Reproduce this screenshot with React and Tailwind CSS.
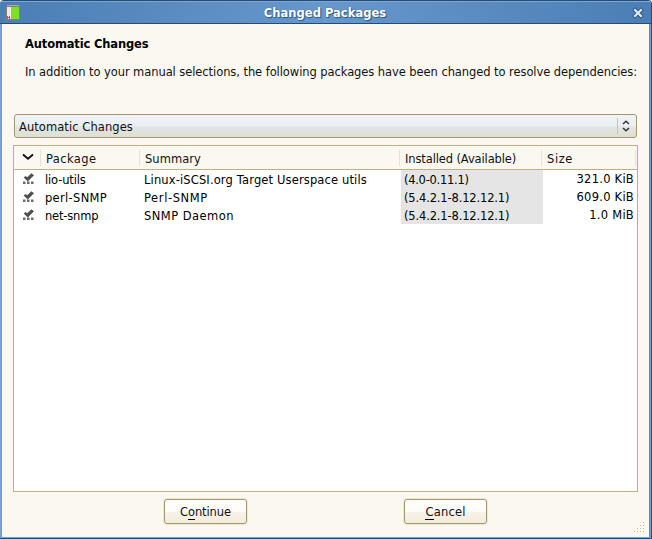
const packages = [
  { name: 'lio-utils', nameTracking: 'tracking-[-0.15px]', summary: 'Linux-iSCSI.org Target Userspace utils', summaryTracking: 'tracking-[0.14px]', version: '(4.0-0.11.1)', versionTracking: 'tracking-[-0.28px]', size: '321.0 KiB' },
  { name: 'perl-SNMP', nameTracking: 'tracking-[0.32px]', summary: 'Perl-SNMP', summaryTracking: 'tracking-[0.6px]', version: '(5.4.2.1-8.12.12.1)', versionTracking: 'tracking-[-0.15px]', size: '609.0 KiB' },
  { name: 'net-snmp', nameTracking: 'tracking-[-0.18px]', summary: 'SNMP Daemon', summaryTracking: 'tracking-[0.45px]', version: '(5.4.2.1-8.12.12.1)', versionTracking: 'tracking-[-0.15px]', size: '1.0 MiB' },
];

function AppIcon() {
  return (
    <svg className="shrink-0" width="16" height="16" viewBox="0 0 16 16" shapeRendering="crispEdges">
      <path d="M2 0h12v1H2z" fill="#aaa" />
      <path d="M1 1h14v14H1z" fill="#8c7d75" />
      <path d="M2 2h4v12H2z" fill="#ece9ee" />
      <path d="M6 2h8v12H6z" fill="#79e31c" />
      <path d="M2 11h1v3H2zM4 11h1v3H4zM3 12h1v1H3z" fill="#d64a46" />
    </svg>
  );
}

function CloseIcon() {
  return (
    <svg className="shrink-0" width="12" height="12" viewBox="0 0 12 12">
      <path d="M3 3l6 6M9 3l-6 6" stroke="#2f5682" strokeWidth="4" strokeLinecap="square" />
      <path d="M3 3l6 6M9 3l-6 6" stroke="#dfe9f5" strokeWidth="2.2" strokeLinecap="square" />
    </svg>
  );
}

function AutoInstallIcon() {
  return (
    <svg width="12" height="12" viewBox="0 0 12 12">
      <path d="M1.700 4.500L3.600 3.100L5.200 4.300L9.400.300L12 2.200L5.800 8.500z" fill="#505050" />
      <path d="M1 8.500h2.500v2.500H1zM5 8.500h2.500v2.500H5zM9 8.500h2.500v2.500H9z" fill="#6b6b6b" />
    </svg>
  );
}

function DialogButton({ children, tracking }) {
  return (
    <button className={`flex h-[25px] w-[83px] items-center justify-center rounded-[3px] border border-[#a8966a] bg-[linear-gradient(#ffffff_0%,#fdfcf9_50%,#f7f3e8_52%,#f1ecdb_100%)] text-[11.5px] shadow-[0_0_0_1px_#eee8d7] ${tracking}`}>
      <span className="pt-px leading-[14px] whitespace-pre">{children}</span>
    </button>
  );
}

function Mnemonic({ children }) {
  return <span className="inline-block h-[15px] border-b border-black">{children}</span>;
}

export default function App() {
  return (
    <div className="flex h-[539px] w-[652px] flex-col overflow-hidden rounded-t-[4px] border-t border-r border-b border-[#294b73] bg-[#fbf8f1] font-['DejaVu_Sans',sans-serif] text-[11.5px] leading-[18px] text-[#111]">
      <header className="flex h-[23px] shrink-0 items-center border-t border-b border-t-[#7ba7d8] border-b-[#294b73] bg-[linear-gradient(90deg,#4b7eb5,#6798cc_50%,#4b7eb5)] pr-[7px] pl-[5px]">
        <AppIcon />
        <h1 className="flex-1 pt-px pr-[3px] text-center text-[11.5px] leading-4 font-bold tracking-[0.03px] text-white [text-shadow:1px_1px_1px_#2f5682,0_0_1px_#2f5682]">
          Changed Packages
        </h1>
        <CloseIcon />
      </header>
      <main className="flex min-h-0 flex-1 flex-col border-r border-b border-l border-[#76a3d6] pr-[13px] pl-[12px] shadow-[inset_1px_0_#8797a8,inset_-1px_0_#6b84a0]">
        <h2 className="mt-[11px] ml-3 font-bold tracking-[-0.15px] whitespace-nowrap text-black">Automatic Changes</h2>
        <p className="mt-[10px] ml-3 w-[620px] tracking-[-0.073px] whitespace-nowrap">
          In addition to your manual selections, the following packages have been changed to resolve dependencies:
        </p>
        <div className="mt-[33px] ml-px flex h-[24px] w-[623px] shrink-0 items-center rounded-[3px] border border-[#a8966a] bg-[linear-gradient(#eff2f8_0%,#eaeff4_50%,#e2e5e3_55%,#dedfd5_100%)] pl-1">
          <span className="flex-1 pt-px tracking-[0.07px]">Automatic Changes</span>
          <span className="h-4 w-px bg-[#c9c4ad]" />
          <svg className="mr-[6px] ml-[4px]" width="8" height="12" viewBox="0 0 8 12" fill="none" stroke="#333" strokeWidth="1.5">
            <path d="M1 4l3-2.700L7 4M1 8l3 2.700L7 8" />
          </svg>
        </div>
        <section className="mt-[7px] flex h-[347px] w-[625px] shrink-0 flex-col border border-[#c2ae7f] bg-white">
          <div className="grid h-[24px] shrink-0 grid-cols-[27px_99px_260px_142px_94px_1px] items-center border-b border-[#c2ae7f] bg-[#fbf8f1]">
            <div className="flex h-4 items-center justify-center border-r border-[#e9e2cc] pl-[2px]">
              <svg className="mb-[2px]" width="12" height="8" viewBox="0 0 12 8" fill="none" stroke="#111" strokeWidth="1.8">
                <path d="M1 1.500L6 5.800L11 1.500" />
              </svg>
            </div>
            <div className="h-4 border-r border-[#e9e2cc] pt-px pl-[5px] leading-4 tracking-[0.4px]">Package</div>
            <div className="h-4 border-r border-[#e9e2cc] pt-px pl-[5px] leading-4 tracking-[0.05px]">Summary</div>
            <div className="h-4 border-r border-[#e9e2cc] pt-px pl-[5px] leading-4 tracking-[-0.12px]">Installed (Available)</div>
            <div className="h-4 border-r border-[#e9e2cc] pt-px pl-[5px] leading-4 tracking-[0.6px]">Size</div>
          </div>
          {packages.map((p) => (
            <div key={p.name} className="grid h-[18px] shrink-0 grid-cols-[27px_100px_260px_142px_94px] whitespace-nowrap text-black">
              <div className="pt-[3px] pl-[8px]"><AutoInstallIcon /></div>
              <div className={`pt-px pl-[4px] ${p.nameTracking}`}>{p.name}</div>
              <div className={`pt-px pl-[3px] ${p.summaryTracking}`}>{p.summary}</div>
              <div className={`h-[18px] bg-[#e5e5e5] pt-px pl-[3px] ${p.versionTracking}`}>{p.version}</div>
              <div className="pr-[3px] text-right tracking-[0.25px]">{p.size}</div>
            </div>
          ))}
        </section>
        <div className="mt-[7px] ml-[151px] flex gap-[157px]">
          <DialogButton tracking="tracking-[-0.1px]">C<Mnemonic>o</Mnemonic>ntinue</DialogButton>
          <DialogButton tracking="tracking-[0.2px]"><Mnemonic>C</Mnemonic>ancel</DialogButton>
        </div>
        <svg className="mt-[-2px] -mr-[8px] self-end" width="11" height="11" viewBox="0 0 11 11" fill="#cbb98a" shapeRendering="crispEdges">
          <path d="M9 0h1v1H9zM9 3h1v1H9zM6 3h1v1H6zM9 6h1v1H9zM6 6h1v1H6zM3 6h1v1H3zM9 9h1v1H9zM6 9h1v1H6zM3 9h1v1H3zM0 9h1v1H0z" />
        </svg>
      </main>
    </div>
  );
}
